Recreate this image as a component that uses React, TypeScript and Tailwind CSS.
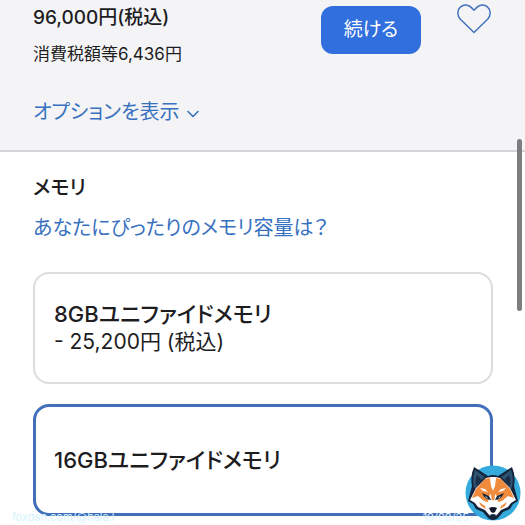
import { useState } from "react";

type MemoryOption = {
    id: string;
    name: string;
    price?: string;
}

const memoryOptions: MemoryOption[] = [
    { id: "8gb", name: "8GBユニファイドメモリ", price: "- 25,200円 (税込)" },
    { id: "16gb", name: "16GBユニファイドメモリ" },
];

function HeartIcon() {
    return (
        <svg viewBox="0 0 34 30" className="h-[30px] w-[34px]" fill="none" stroke="#4373bd" strokeWidth="1.5" strokeLinejoin="round">
            <path d="M17 28.500 3.400 15.200C-.2 11.500.2 5.800 3.300 3.100 7-.1 11.500.7 14.200 3.400L17 6.200l2.800-2.800C22.500.7 27-.1 30.700 3.100c3.100 2.700 3.500 8.400-.1 12.100Z" />
        </svg>
    )
}

function ChevronIcon() {
    return (
        <svg viewBox="0 0 12 8" className="mt-1 h-2 w-3" fill="none" stroke="#3871bf" strokeWidth="1.600" strokeLinecap="round" strokeLinejoin="round">
            <path d="m1 1.500 5 5 5-5" />
        </svg>
    )
}

function FoxLogo() {
    return (
        <svg viewBox="0 0 56 56" className="h-14 w-14">
            <circle cx="28" cy="28" r="27.500" fill="#35aadc" />
            {/* head outline with ears */}
            <path d="M9 2 23 11q5-2 10 0L47 2q4 9 2 19l4 15-5 3-3 5-7 3-5 6q-5 4-10 0l-5-6-7-3-3-5-5-3 4-15Q5 11 9 2Z" fill="#15243a" />
            {/* ears */}
            <path d="M10 5 20 12l-5 4-5 8-1-2Q7 13 10 5ZM46 5 36 12l5 4 5 8 1-2q2-9-1-17Z" fill="#2d5272" />
            <path d="m12 10 4 4-5 7q-1-6 1-11Zm32 0-4 4 5 7q1-6-1-11Z" fill="#1a2c44" />
            {/* fur */}
            <path d="M21 13q7-2 14 0l10 10 6 12-5 3-3 4-7 3-5 6h-6l-5-6-7-3-3-4-5-3 6-12Z" fill="#fff" />
            <path d="m20 14 5-1 3 10 3-10 5 1 9 10 4 9-6-2-6 5-4 1-1-6-2-2-1 9-1 5-1-5-1-9-2 2-1 6-4-1-6-5-6 2 4-9Z" fill="#f08a3c" />
            <path d="m25 13 3-1 3 1-1 8-2 5-2-5Z" fill="#fff" />
            <path d="m15 23 5 1 3 3-5-1Zm26 0-5 1-3 3 5-1Z" fill="#fff" />
            {/* eyes */}
            <path d="m17 28 7 3 2 4q-6 0-9-7Zm22 0-7 3-2 4q6 0 9-7Z" fill="#15243a" />
            <path d="m20 31 2 1 1 1.500q-2 0-3-2.500Zm16 0-2 1-1 1.500q2 0 3-2.500Z" fill="#8ccdf0" />
            {/* muzzle */}
            <path d="m25 36 3-1 3 1 3 8-4 7h-4l-4-7Z" fill="#fff" />
            <path d="m14 37 6 4 1 3-5-3Zm28 0-6 4-1 3 5-3Z" fill="#f08a3c" />
            <path d="M24 43q4-2 8 0l-2 4-2 1-2-1Z" fill="#111827" />
            <path d="m24 50 4-1 4 1-4 2Z" fill="#15243a" />
        </svg>
    )
}

function MemoryCard({ option, checked, onSelect }: { option: MemoryOption, checked: boolean, onSelect: () => void }) {
    return (
        <label
            className={
                checked
                    ? "flex h-28 cursor-pointer flex-col justify-center rounded-2xl border-3 border-[#416fb9] bg-white px-[18px]"
                    : "flex h-28 cursor-pointer flex-col justify-center rounded-2xl border-2 border-[#dcdcde] bg-white px-[19px]"
            }
        >
            <input type="radio" name="memory" value={option.id} checked={checked} onChange={onSelect} className="sr-only" />
            <span className="text-[22px] leading-7 font-medium">{option.name}</span>
            {option.price && <span className="text-[21px] leading-7">{option.price}</span>}
        </label>
    )
}

function App() {
    const [selected, setSelected] = useState<string>("16gb");

    return (
        <div className="relative min-h-screen overflow-hidden bg-white font-['Inter','Noto_Sans_CJK_JP',sans-serif] text-[#1d1d1f] [font-feature-settings:'palt']">
            <header className="flex items-start justify-between border-b-2 border-[#d5d5d8] bg-[#f4f4f6] pt-1 pr-[34px] pb-6 pl-[33px]">
                <div>
                    <p className="text-[19px] leading-7 font-medium">96,000円(税込)</p>
                    <p className="mt-2 text-[17px] leading-7">消費税額等6,436円</p>
                    <button type="button" className="mt-[30px] flex cursor-pointer items-center gap-2 text-[20px] leading-7 text-[#3871bf]">
                        オプションを表示
                        <ChevronIcon />
                    </button>
                </div>
                <div className="flex items-start gap-9">
                    <button type="button" className="mt-0.5 h-12 w-[100px] cursor-pointer rounded-xl bg-[#306fdd] text-[19px] text-white">続ける</button>
                    <button type="button" aria-label="お気に入り" className="cursor-pointer">
                        <HeartIcon />
                    </button>
                </div>
            </header>

            <main className="pt-5 pr-8 pb-2 pl-[33px]">
                <h2 className="text-[20px] leading-8 font-medium">メモリ</h2>
                <a href="#memory" className="mt-2 block text-[20px] leading-8 text-[#3871bf]">あなたにぴったりのメモリ容量は？</a>
                <fieldset id="memory" className="mt-7 flex flex-col gap-5">
                    {
                        memoryOptions.map((option) => (
                            <MemoryCard
                                key={option.id}
                                option={option}
                                checked={selected === option.id}
                                onSelect={() => setSelected(option.id)}
                            />
                        ))
                    }
                </fieldset>
            </main>

            <div className="absolute top-[139px] right-[3px] h-[172px] w-[5px] rounded-full bg-[#7d7d7f]" />
            <p className="absolute bottom-0 left-3 text-[11px] leading-4 text-[#d6f3fd]">foxdsn.com/@hala.l</p>
            <p className="absolute right-14 bottom-0 text-[11px] leading-4 text-[#e3f4fc]">19/08/25</p>
            <div className="absolute right-1 bottom-1">
                <FoxLogo />
            </div>
        </div>
    )
}

export default App;
